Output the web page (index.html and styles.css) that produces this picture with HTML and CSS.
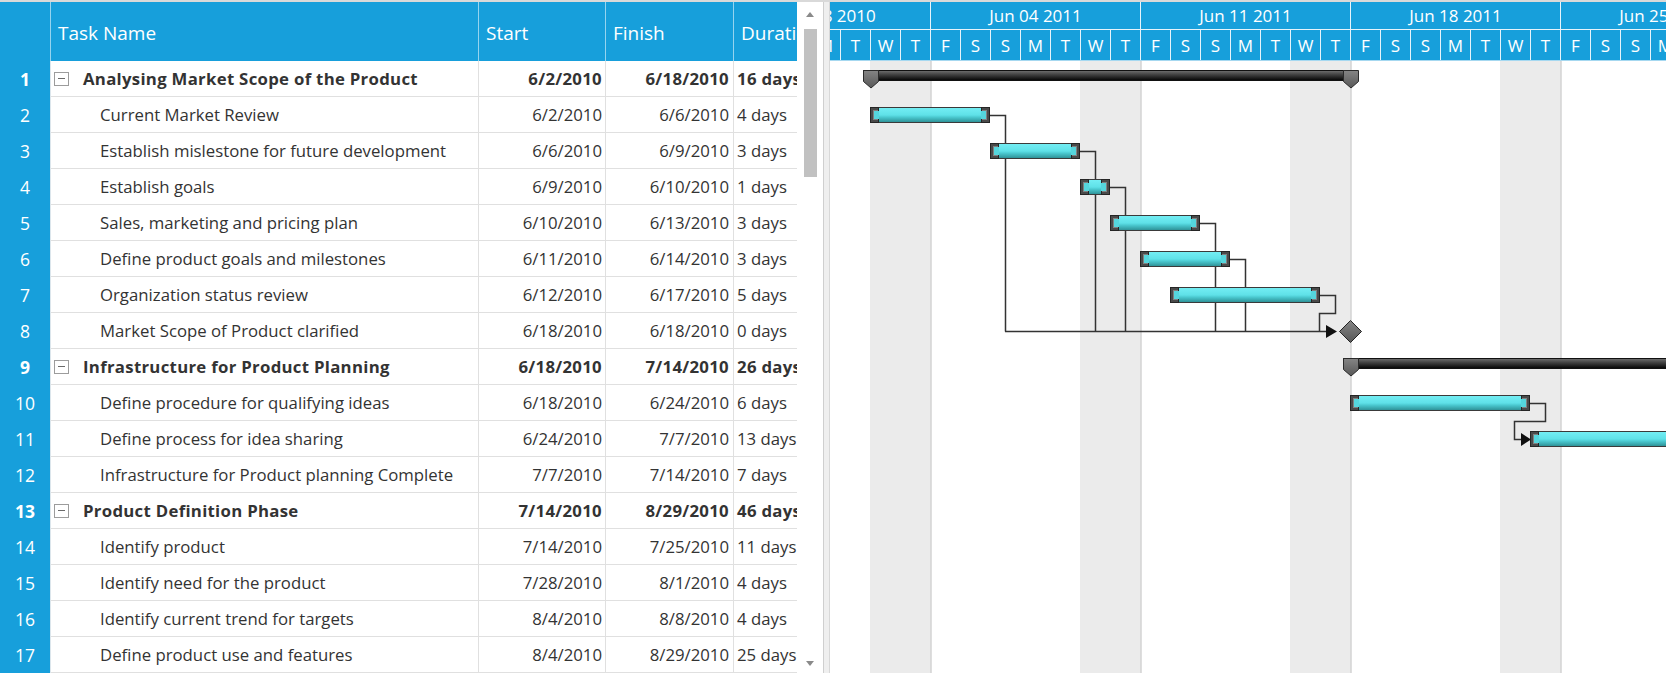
FILE: index.html
```html
<!DOCTYPE html>
<html>
<head>
<meta charset="utf-8">
<title>Gantt</title>
<link rel="stylesheet" href="styles.css">
</head>
<body>
<div class="app">
  <div class="grid">
    <div class="ghead">
      <div class="c num"></div>
      <div class="c name">Task Name</div>
      <div class="c start">Start</div>
      <div class="c finish">Finish</div>
      <div class="c dur">Duration</div>
    </div>
    <div class="gbody">
      <div class="row sum"><div class="c num">1</div><div class="c name"><span class="toggle"></span>Analysing Market Scope of the Product</div><div class="c start">6/2/2010</div><div class="c finish">6/18/2010</div><div class="c dur">16 days</div></div>
      <div class="row"><div class="c num">2</div><div class="c name child">Current Market Review</div><div class="c start">6/2/2010</div><div class="c finish">6/6/2010</div><div class="c dur">4 days</div></div>
      <div class="row"><div class="c num">3</div><div class="c name child">Establish mislestone for future development</div><div class="c start">6/6/2010</div><div class="c finish">6/9/2010</div><div class="c dur">3 days</div></div>
      <div class="row"><div class="c num">4</div><div class="c name child">Establish goals</div><div class="c start">6/9/2010</div><div class="c finish">6/10/2010</div><div class="c dur">1 days</div></div>
      <div class="row"><div class="c num">5</div><div class="c name child">Sales, marketing and pricing plan</div><div class="c start">6/10/2010</div><div class="c finish">6/13/2010</div><div class="c dur">3 days</div></div>
      <div class="row"><div class="c num">6</div><div class="c name child">Define product goals and milestones</div><div class="c start">6/11/2010</div><div class="c finish">6/14/2010</div><div class="c dur">3 days</div></div>
      <div class="row"><div class="c num">7</div><div class="c name child">Organization status review</div><div class="c start">6/12/2010</div><div class="c finish">6/17/2010</div><div class="c dur">5 days</div></div>
      <div class="row"><div class="c num">8</div><div class="c name child">Market Scope of Product clarified</div><div class="c start">6/18/2010</div><div class="c finish">6/18/2010</div><div class="c dur">0 days</div></div>
      <div class="row sum"><div class="c num">9</div><div class="c name"><span class="toggle"></span>Infrastructure for Product Planning</div><div class="c start">6/18/2010</div><div class="c finish">7/14/2010</div><div class="c dur">26 days</div></div>
      <div class="row"><div class="c num">10</div><div class="c name child">Define procedure for qualifying ideas</div><div class="c start">6/18/2010</div><div class="c finish">6/24/2010</div><div class="c dur">6 days</div></div>
      <div class="row"><div class="c num">11</div><div class="c name child">Define process for idea sharing</div><div class="c start">6/24/2010</div><div class="c finish">7/7/2010</div><div class="c dur">13 days</div></div>
      <div class="row"><div class="c num">12</div><div class="c name child">Infrastructure for Product planning Complete</div><div class="c start">7/7/2010</div><div class="c finish">7/14/2010</div><div class="c dur">7 days</div></div>
      <div class="row sum"><div class="c num">13</div><div class="c name"><span class="toggle"></span>Product Definition Phase</div><div class="c start">7/14/2010</div><div class="c finish">8/29/2010</div><div class="c dur">46 days</div></div>
      <div class="row"><div class="c num">14</div><div class="c name child">Identify product</div><div class="c start">7/14/2010</div><div class="c finish">7/25/2010</div><div class="c dur">11 days</div></div>
      <div class="row"><div class="c num">15</div><div class="c name child">Identify need for the product</div><div class="c start">7/28/2010</div><div class="c finish">8/1/2010</div><div class="c dur">4 days</div></div>
      <div class="row"><div class="c num">16</div><div class="c name child">Identify current trend for targets</div><div class="c start">8/4/2010</div><div class="c finish">8/8/2010</div><div class="c dur">4 days</div></div>
      <div class="row"><div class="c num">17</div><div class="c name child">Define product use and features</div><div class="c start">8/4/2010</div><div class="c finish">8/29/2010</div><div class="c dur">25 days</div></div>
    </div>
  </div>
  <div class="vscroll">
    <span class="arrow up"></span>
    <div class="thumb"></div>
    <span class="arrow down"></span>
  </div>
  <div class="splitter"></div>
  <div class="chart">
    <div class="thead">
      <div class="timeline">
        <div class="weeks">
          <div class="week">May 28 2010</div>
          <div class="week">Jun 04 2011</div>
          <div class="week">Jun 11 2011</div>
          <div class="week">Jun 18 2011</div>
          <div class="week">Jun 25 2011</div>
        </div>
        <div class="days">
          <div class="day">F</div><div class="day">S</div><div class="day">S</div><div class="day">M</div><div class="day">T</div><div class="day">W</div><div class="day">T</div>
          <div class="day">F</div><div class="day">S</div><div class="day">S</div><div class="day">M</div><div class="day">T</div><div class="day">W</div><div class="day">T</div>
          <div class="day">F</div><div class="day">S</div><div class="day">S</div><div class="day">M</div><div class="day">T</div><div class="day">W</div><div class="day">T</div>
          <div class="day">F</div><div class="day">S</div><div class="day">S</div><div class="day">M</div><div class="day">T</div><div class="day">W</div><div class="day">T</div>
          <div class="day">F</div><div class="day">S</div><div class="day">S</div><div class="day">M</div><div class="day">T</div><div class="day">W</div><div class="day">T</div>
        </div>
      </div>
    </div>
    <div class="tbody">
      <svg class="canvas" width="836" height="612" viewBox="830 61 836 612" xmlns="http://www.w3.org/2000/svg">
        <defs>
          <linearGradient id="cy" x1="0" y1="0" x2="0" y2="1">
            <stop offset="0" stop-color="#74eef4"/>
            <stop offset="0.5" stop-color="#5fe1e8"/>
            <stop offset="0.65" stop-color="#4ac8cf"/>
            <stop offset="1" stop-color="#2c8d92"/>
          </linearGradient>
          <linearGradient id="sm" x1="0" y1="0" x2="0" y2="1">
            <stop offset="0" stop-color="#707070"/>
            <stop offset="0.45" stop-color="#3d3d3d"/>
            <stop offset="1" stop-color="#040404"/>
          </linearGradient>
          <linearGradient id="mk" x1="0" y1="0" x2="0" y2="1">
            <stop offset="0" stop-color="#858585"/>
            <stop offset="1" stop-color="#575757"/>
          </linearGradient>
          <g id="hl">
            <rect x="0.5" y="0.5" width="8" height="15" fill="#4a4a4a" stroke="#252525"/>
            <path d="M3 3.5 H8 M3.5 3 V13 M3 12.5 H8" stroke="#808080" fill="none"/>
            <rect x="4" y="4" width="5" height="8" fill="#55d6dd"/>
          </g>
          <g id="hr">
            <rect x="0.5" y="0.5" width="8" height="15" fill="#4a4a4a" stroke="#252525"/>
            <path d="M1 3.5 H6 M5.5 3 V13 M1 12.5 H6" stroke="#808080" fill="none"/>
            <rect x="0" y="4" width="5" height="8" fill="#55d6dd"/>
          </g>
        </defs>

        <g class="shade" fill="#ebebeb">
          <rect x="870" y="61" width="61" height="612"/>
          <rect x="1080" y="61" width="61" height="612"/>
          <rect x="1290" y="61" width="61" height="612"/>
          <rect x="1500" y="61" width="61" height="612"/>
        </g>
        <g stroke="#d3d3d3" stroke-width="1.5">
          <line x1="931" y1="61" x2="931" y2="673"/>
          <line x1="1141" y1="61" x2="1141" y2="673"/>
          <line x1="1351" y1="61" x2="1351" y2="673"/>
          <line x1="1561" y1="61" x2="1561" y2="673"/>
        </g>

        <g fill="none" stroke="#333" stroke-width="1.5">
          <path d="M990 115.5 H1005.5 V331.5"/>
          <path d="M1080 151.5 H1095.5 V331.5"/>
          <path d="M1110 187.5 H1125.5 V331.5"/>
          <path d="M1200 223.5 H1215.5 V331.5"/>
          <path d="M1230 259.5 H1245.5 V331.5"/>
          <path d="M1320 295.5 H1335.5 V313.5 H1319.5 V331.5"/>
          <path d="M1005 331.5 H1327"/>
          <path d="M1530 403.5 H1545.5 V421.5 H1514.5 V439.5 H1522"/>
        </g>
        <polygon points="1326,325 1337,331.5 1326,338" fill="#111"/>
        <polygon points="1521,433 1531,439.5 1521,446" fill="#111"/>

        <rect x="863.5" y="70.5" width="494" height="10" fill="url(#sm)" stroke="#111"/>
        <path d="M863.5 70.5 H878.5 V81.5 L871 88 L863.5 81.5 Z" fill="url(#mk)" stroke="#2a2a2a"/>
        <path d="M1343.5 70.5 H1358.5 V81.5 L1351 88 L1343.5 81.5 Z" fill="url(#mk)" stroke="#2a2a2a"/>

        <rect x="870.5" y="107.5" width="119" height="15" fill="url(#cy)" stroke="#3a3a3a"/>
        <use href="#hl" x="870" y="107"/><use href="#hr" x="981" y="107"/>
        <rect x="990.5" y="143.5" width="89" height="15" fill="url(#cy)" stroke="#3a3a3a"/>
        <use href="#hl" x="990" y="143"/><use href="#hr" x="1071" y="143"/>
        <rect x="1080.5" y="179.5" width="29" height="15" fill="url(#cy)" stroke="#3a3a3a"/>
        <use href="#hl" x="1080" y="179"/><use href="#hr" x="1101" y="179"/>
        <rect x="1110.5" y="215.5" width="89" height="15" fill="url(#cy)" stroke="#3a3a3a"/>
        <use href="#hl" x="1110" y="215"/><use href="#hr" x="1191" y="215"/>
        <rect x="1140.5" y="251.5" width="89" height="15" fill="url(#cy)" stroke="#3a3a3a"/>
        <use href="#hl" x="1140" y="251"/><use href="#hr" x="1221" y="251"/>
        <rect x="1170.5" y="287.5" width="149" height="15" fill="url(#cy)" stroke="#3a3a3a"/>
        <use href="#hl" x="1170" y="287"/><use href="#hr" x="1311" y="287"/>

        <polygon points="1350.5,320.5 1361.5,331.5 1350.5,342.5 1339.5,331.5" fill="url(#mk)" stroke="#222"/>

        <rect x="1343.5" y="358.5" width="400" height="10" fill="url(#sm)" stroke="#111"/>
        <path d="M1343.5 358.5 H1358.5 V369.5 L1351 376 L1343.5 369.5 Z" fill="url(#mk)" stroke="#2a2a2a"/>

        <rect x="1350.5" y="395.5" width="179" height="15" fill="url(#cy)" stroke="#3a3a3a"/>
        <use href="#hl" x="1350" y="395"/><use href="#hr" x="1521" y="395"/>
        <rect x="1530.5" y="431.5" width="389" height="15" fill="url(#cy)" stroke="#3a3a3a"/>
        <use href="#hl" x="1530" y="431"/>
      </svg>
    </div>
  </div>
</div>
</body>
</html>
```

FILE: styles.css
```css
* { box-sizing: border-box; }
html, body { margin: 0; padding: 0; height: 100%; overflow: hidden; background: #fff; }
body { font-family: "Open Sans", "Noto Sans", sans-serif; color: #333; }

.app {
  display: flex;
  height: 673px;
  border-top: 2px solid #d9d9d9;
}

/* ---- grid ---- */
.grid {
  width: 797px;
  flex: none;
  overflow: hidden;
  display: flex;
  flex-direction: column;
}
.ghead {
  display: flex;
  height: 59px;
  flex: none;
  background: #179fdb;
  color: #fff;
  font-size: 19px;
}
.c {
  flex: none;
  height: 100%;
  display: flex;
  align-items: center;
  white-space: nowrap;
  overflow: hidden;
}
.ghead .c {
  padding-left: 7px;
  padding-top: 2px;
  border-right: 1px solid rgba(255, 255, 255, 0.55);
}
.ghead .num { padding-left: 0; }

.num { width: 51px; }
.name { width: 428px; }
.start { width: 127px; }
.finish { width: 128px; }
.dur { width: 110px; }

.gbody { display: flex; flex-direction: column; font-size: 16.75px; }
.row { display: flex; height: 36px; flex: none; }
.row .c { border-bottom: 1px solid #e0e0e0; border-right: 1px solid #e0e0e0; }
.row .num {
  background: #179fdb;
  color: #fff;
  font-size: 17.5px;
  justify-content: center;
  border-bottom: none;
  border-right: 1px solid #dce6ec;
}
.row .name { padding-left: 3px; }
.row .name.child { padding-left: 49px; }
.row .start { justify-content: flex-end; padding-right: 3px; }
.row .finish { justify-content: flex-end; padding-right: 4px; }
.row .dur { padding-left: 3px; border-right: none; }
.row.sum .c { font-weight: 700; letter-spacing: 0.3px; }
.row.sum .num { letter-spacing: 0; }

.toggle {
  position: relative;
  width: 15px;
  height: 14px;
  border: 1px solid #9c9c9c;
  margin-right: 14px;
  flex: none;
}
.toggle::after {
  content: "";
  position: absolute;
  left: 3px;
  right: 3px;
  top: 5px;
  height: 1px;
  background: #6a6a6a;
}

/* ---- scrollbar ---- */
.vscroll {
  width: 26px;
  flex: none;
  display: flex;
  flex-direction: column;
  align-items: center;
  background: #fff;
}
.arrow { width: 0; height: 0; border-left: 4px solid transparent; border-right: 4px solid transparent; }
.arrow.up { border-bottom: 5px solid #8a8a8a; margin-top: 10px; }
.arrow.down { border-top: 5px solid #8a8a8a; margin-top: auto; margin-bottom: 7px; }
.thumb { width: 13px; height: 148px; background: #c1c1c1; margin-top: 12px; }

.splitter {
  width: 7px;
  flex: none;
  background: #efefef;
  border-left: 1px solid #cfcfcf;
  border-right: 1px solid #d8d8d8;
}

/* ---- chart ---- */
.chart {
  flex: 1;
  min-width: 0;
  overflow: hidden;
  display: flex;
  flex-direction: column;
}
.thead {
  height: 59px;
  flex: none;
  background: #179fdb;
  color: #fff;
  font-size: 17px;
  overflow: hidden;
}
.timeline { margin-left: -109px; width: 1050px; }
.weeks { display: flex; height: 28px; border-bottom: 1px solid #e6f4fb; }
.week {
  flex: none;
  width: 210px;
  display: flex;
  align-items: center;
  justify-content: center;
  border-right: 1px solid #e6f4fb;
  white-space: nowrap;
}
.days { display: flex; height: 31px; border-bottom: 1px solid #a6d8f0; }
.day {
  flex: none;
  width: 30px;
  display: flex;
  align-items: center;
  justify-content: center;
  border-right: 1px solid #e6f4fb;
}
.tbody { flex: 1; overflow: hidden; }
.canvas { display: block; }
```
